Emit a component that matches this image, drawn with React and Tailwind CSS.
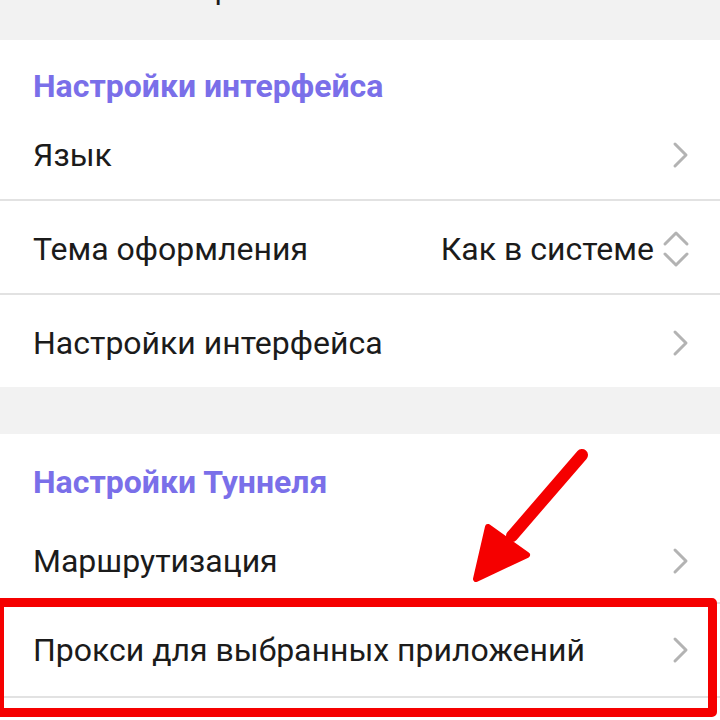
const font = { fontFamily: 'Roboto, "Noto Sans", sans-serif' }

function Chevron() {
  return (
    <svg width="18" height="28" viewBox="0 0 18 28" className="shrink-0">
      <path d="M3 3 L14 14 L3 25" fill="none" stroke="#b3b3b3" strokeWidth="3" strokeLinecap="round" strokeLinejoin="round" />
    </svg>
  )
}

function UpDown() {
  return (
    <svg width="28" height="40" viewBox="0 0 28 40" className="shrink-0">
      <path d="M3 15 L14 4 L25 15" fill="none" stroke="#b3b3b3" strokeWidth="3" strokeLinecap="round" strokeLinejoin="round" />
      <path d="M3 25 L14 36 L25 25" fill="none" stroke="#b3b3b3" strokeWidth="3" strokeLinecap="round" strokeLinejoin="round" />
    </svg>
  )
}

function Row({ label, value, updown, className }) {
  return (
    <div className={`flex items-center justify-between pl-[33px] pr-[30px] ${className}`}>
      <span className="text-[32px] leading-none text-[#1b1b1b]">{label}</span>
      <div className="flex items-center gap-[8px]">
        {value && <span className="text-[32px] leading-none text-[#1b1b1b]">{value}</span>}
        {updown ? <UpDown /> : <Chevron />}
      </div>
    </div>
  )
}

export default function App() {
  return (
    <div className="relative h-[720px] w-[720px] overflow-hidden bg-[#f2f2f2]" style={font}>
      <div className="h-[40px] overflow-hidden">
        <p className="-mt-[26px] ml-[147px] text-[30px] leading-[30px] text-[#1b1b1b]">Настройки</p>
      </div>

      <section className="bg-white">
        <div className="h-[67px] pl-[33px] pt-[30px]">
          <h2 className="text-[32px] font-bold leading-none text-[#7a6fe9]">Настройки интерфейса</h2>
        </div>
        <Row label="Язык" className="h-[94px] border-b-2 border-[#e2e2e2] pt-[3px]" />
        <Row label="Тема оформления" value="Как в системе" updown className="h-[94px] border-b-2 border-[#e2e2e2] pt-[3px]" />
        <Row label="Настройки интерфейса" className="h-[92px] pt-[3px]" />
      </section>

      <div className="h-[47px]" />

      <section className="bg-white pb-[30px]">
        <div className="h-[76px] pl-[33px] pt-[32px]">
          <h2 className="text-[32px] font-bold leading-none text-[#7a6fe9]">Настройки Туннеля</h2>
        </div>
        <Row label="Маршрутизация" className="h-[94px] border-b-2 border-[#e2e2e2] pt-[9px]" />
        <Row label="Прокси для выбранных приложений" className="h-[94px] border-b-2 border-[#e2e2e2]" />
      </section>

      {/* red highlight box */}
      <div className="absolute left-[-5px] top-[598px] h-[119px] w-[722px] rounded-[5px] border-[9px] border-[#f50000]" />

      {/* arrow */}
      <svg className="absolute left-0 top-0" width="720" height="720" viewBox="0 0 720 720">
        <line x1="582" y1="455" x2="512" y2="536" stroke="#f50000" strokeWidth="12" strokeLinecap="round" />
        <polygon points="488,527 527,555 476,579" fill="#f50000" stroke="#f50000" strokeWidth="6" strokeLinejoin="round" />
      </svg>
    </div>
  )
}
